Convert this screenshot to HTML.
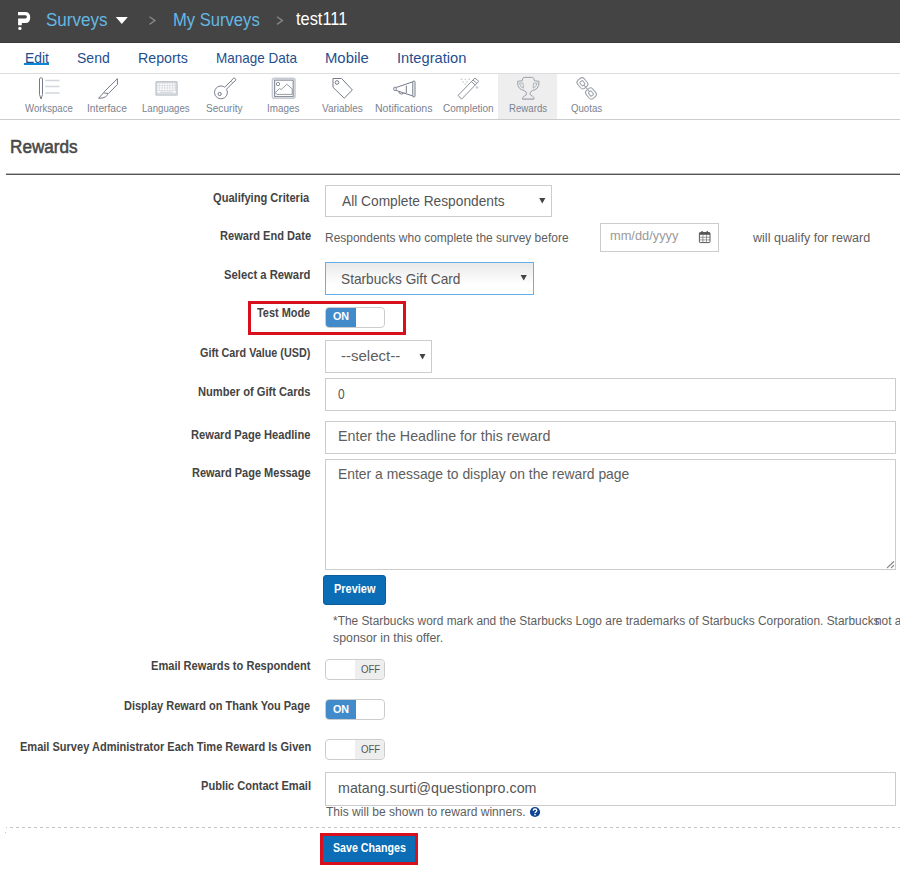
<!DOCTYPE html>
<html><head><meta charset="utf-8"><style>
*{margin:0;padding:0;box-sizing:border-box}
html,body{width:900px;height:874px;overflow:hidden;background:#fff;font-family:"Liberation Sans",sans-serif}
.abs,.t{position:absolute}
.t{white-space:pre;transform-origin:0 0}
.box{position:absolute;border:1px solid #cccccc;background:#fff}
.tg{position:absolute;width:60px;height:21px;border:1px solid #cccccc;border-radius:4px;background:#fff;overflow:hidden}
.tgon{position:absolute;left:0;top:0;width:29.5px;height:19px;background:#428bca}
.tgoff{position:absolute;right:0;top:0;width:29.5px;height:19px;background:#eeeeee}
</style></head><body>
<!-- header -->
<div class="abs" style="left:0;top:0;width:900px;height:43px;background:#444444"></div>
<div class="abs" style="left:0;top:42px;width:900px;height:1px;background:#3a3a3a"></div>
<svg class="abs" style="left:0;top:0" width="360" height="42">
 <path d="M18 11.9 L25.2 11.9 Q30.2 11.9 30.2 17.4 Q30.2 22.9 25.2 22.9 L21.8 22.9 L21.8 25.3 L18.1 25.3 L18.1 18.4 L25.4 18.4 Q26.9 18.4 26.9 16.85 Q26.9 15.3 25.4 15.3 L18 15.3 Z" fill="#ffffff"/>
 <circle cx="19.9" cy="28.4" r="1.65" fill="#fff"/>
 <path d="M115.8 17 L127.8 17 L121.8 24 Z" fill="#ffffff"/>
 <path d="M149.5 16.8 L155 20.6 L149.5 24.4" fill="none" stroke="#888888" stroke-width="1.3"/>
 <path d="M277 16.8 L282.5 20.6 L277 24.4" fill="none" stroke="#888888" stroke-width="1.3"/>
</svg>
<!-- nav -->
<div class="abs" style="left:24.2px;top:63.4px;width:24.7px;height:1.8px;background:#0b88d5"></div>
<div class="abs" style="left:0;top:73px;width:900px;height:1px;background:#dddddd"></div>
<div class="abs" style="left:498px;top:74px;width:59px;height:45px;background:#eeeeee"></div>
<div class="abs" style="left:0;top:119px;width:900px;height:1px;background:#cccccc"></div>

<svg class="abs" style="left:0;top:74px" width="620" height="30" viewBox="0 74 620 30">
 <g fill="none" stroke="#747c89" stroke-width="1" stroke-linejoin="round">
  <!-- workspace pencil -->
  <path d="M39.5 78.5 Q41 76.8 42.5 78.5 L42.5 94.5 L41 99 L39.5 94.5 Z"/>
  <!-- interface scalpel -->
  <path d="M117.4 78.7 L117.5 84.4 L108.6 93.3 M117.4 78.7 L104.2 91.8 M103.2 92.8 L108.6 93.6 M103.6 92.6 L98.6 98.3 Q103.5 98.3 105.6 96.8 Q107 95.6 107.7 94.2"/>
  <!-- security key -->
  <path d="M224.7 87.2 A6.4 6.4 0 1 0 226.5 89.2"/>
  <circle cx="219.7" cy="94" r="1.6"/>
  <path d="M224.7 87.2 L231.8 80.2 M226.5 89.2 L233.3 82.4 M231.8 80.2 L233.2 78.4 Q234.2 77.6 235.3 78.6 Q236.3 79.6 235.4 80.6 L233.3 82.4 M231.6 81.6 L232.4 82.6"/>
  <!-- images -->
  <rect x="274.6" y="80.2" width="18.6" height="16.4" stroke="#8b929d" stroke-width="1.2"/>
  <path d="M275.3 92.7 L279.6 88.4 L281.1 89.6 L286.9 84.3 L292.2 88.9 L292.2 94.4 L276.8 94.4 Z" stroke="#8b929d" stroke-width="0.9"/>
  <circle cx="278" cy="84" r="1.7" stroke="#8b929d"/>
  <!-- tag -->
  <path d="M333 78.5 L341.6 78.5 L352.4 90 L344.2 98.2 L333 87.3 Z"/>
  <circle cx="337" cy="82.5" r="1.8"/>
  <!-- megaphone -->
  <path d="M396.2 87.5 L412.8 81.8 M396.2 90.4 L412.8 96 M406.3 85.6 L406.3 93.2"/>
  <rect x="393.8" y="87.2" width="2.4" height="3.4" rx="1"/>
  <rect x="412.8" y="81" width="2.2" height="16" rx="1.1"/>
  <path d="M398.8 91.6 Q399 94 401.5 94 Q403.5 94 404 92.8"/>
  <!-- wand -->
  <path d="M458.2 95.3 L461.6 99.2 L478.8 81.3 L474.9 78 Z M473 80 L476.9 83.4 M471.4 81.6 L475.2 85" stroke="#8a919c"/>
  <!-- trophy -->
  <path d="M 524.00 77.40 Q 522.40 77.60 522.20 80.80 L 517.60 81.30 Q 517.20 86.20 519.60 88.40 Q 521.50 90.00 524.30 90.60 Q 526.60 91.60 526.60 93.80 Q 526.50 95.30 524.00 96.30 Q 522.00 97.40 522.60 99.20 L 528.30 99.20" stroke="#9aa0aa"/>
  <path d="M 532.60 77.40 Q 534.20 77.60 534.40 80.80 L 539.00 81.30 Q 539.40 86.20 537.00 88.40 Q 535.10 90.00 532.30 90.60 Q 530.00 91.60 530.00 93.80 Q 530.10 95.30 532.60 96.30 Q 534.60 97.40 534.00 99.20 L 528.30 99.20" stroke="#9aa0aa"/>
  <path d="M524 77.4 L532.60 77.4" stroke="#9aa0aa"/>
  <path d="M519.4 83.1 L523 83.1 L523.5 88.2 Q520.2 87.2 519.4 83.1 Z M537.20 83.1 L533.60 83.1 L533.10 88.2 Q536.40 87.2 537.20 83.1 Z" stroke="#a9aeb7" stroke-width="0.9"/>
  <path d="M522.6 99.2 L534.00 99.2" stroke="#b3b8c0" stroke-width="1.6"/>
  <!-- chain -->
  <g transform="rotate(-40 586.6 88.3)" stroke="#9aa0aa">
   <rect x="582.3" y="76.6" width="8.6" height="10.4" rx="3"/>
   <rect x="584.8" y="79.4" width="3.6" height="4.6" rx="0.8"/>
   <rect x="582.3" y="89.9" width="8.6" height="10.4" rx="3"/>
   <rect x="584.8" y="92.8" width="3.6" height="4.6" rx="0.8"/>
   <path d="M586.6 84 V92.8"/>
  </g>
 </g>
 <g stroke="#d2d6dc" stroke-width="1.5">
  <path d="M45.2 80.4 H59.6 M45.2 86.4 H59.6 M45.2 93 H59.6"/>
 </g>
 <rect x="272.4" y="78.4" width="22.6" height="19.8" rx="2" fill="none" stroke="#c7ccd3" stroke-width="1.6"/>
 <!-- keyboard -->
 <rect x="155.3" y="81.1" width="22.5" height="14.7" rx="1.5" fill="#c3c8cf"/>
 <rect x="156.6" y="82.4" width="19.9" height="12.1" fill="#d9dde2"/>
 <g fill="#ffffff">
  <rect x="157.5" y="83.4" width="1.7" height="1.6"/><rect x="160.1" y="83.4" width="1.7" height="1.6"/><rect x="162.6" y="83.4" width="1.7" height="1.6"/><rect x="165.2" y="83.4" width="1.7" height="1.6"/><rect x="167.7" y="83.4" width="1.7" height="1.6"/><rect x="170.3" y="83.4" width="1.7" height="1.6"/><rect x="172.8" y="83.4" width="1.7" height="1.6"/><rect x="157.5" y="85.9" width="1.7" height="1.6"/><rect x="160.1" y="85.9" width="1.7" height="1.6"/><rect x="162.6" y="85.9" width="1.7" height="1.6"/><rect x="165.2" y="85.9" width="1.7" height="1.6"/><rect x="167.7" y="85.9" width="1.7" height="1.6"/><rect x="170.3" y="85.9" width="1.7" height="1.6"/><rect x="172.8" y="85.9" width="1.7" height="1.6"/><rect x="157.5" y="88.4" width="1.7" height="1.6"/><rect x="160.1" y="88.4" width="1.7" height="1.6"/><rect x="162.6" y="88.4" width="1.7" height="1.6"/><rect x="165.2" y="88.4" width="1.7" height="1.6"/><rect x="167.7" y="88.4" width="1.7" height="1.6"/><rect x="170.3" y="88.4" width="1.7" height="1.6"/><rect x="172.8" y="88.4" width="1.7" height="1.6"/><rect x="157.5" y="90.9" width="3" height="1.6"/><rect x="172.5" y="90.9" width="3.2" height="1.6"/><rect x="161.4" y="90.9" width="10.2" height="1.0" fill="#eef0f2"/>
 </g>
 <g fill="#c5cad2">
  <circle cx="461.5" cy="79.3" r="0.9"/><circle cx="469.3" cy="79.3" r="0.9"/><circle cx="465.3" cy="79.6" r="0.8"/><circle cx="463.3" cy="82" r="0.8"/><circle cx="467" cy="82" r="0.8"/><circle cx="465.2" cy="84.3" r="0.8"/><circle cx="477" cy="87.5" r="1.2"/>
 </g>
</svg>
<!-- title rule -->
<div class="abs" style="left:6px;top:173px;width:894px;height:1px;background:#bbbbbb"></div>
<div class="abs" style="left:6px;top:174px;width:894px;height:1px;background:#555555"></div>
<!-- fields -->
<div class="box" style="left:325px;top:185px;width:227px;height:32px"></div>
<div class="box" style="left:600px;top:223px;width:119px;height:29px"></div>
<svg class="abs" style="left:698px;top:230px" width="14" height="14" viewBox="0 0 14 14">
 <rect x="1.4" y="2.6" width="10.6" height="10" rx="0.8" fill="none" stroke="#555" stroke-width="1"/>
 <rect x="1.4" y="2.6" width="10.6" height="2.2" fill="#555"/>
 <path d="M1.4 7.3 H12 M1.4 9.9 H12 M4.9 4.8 V12.6 M8.5 4.8 V12.6" stroke="#777" stroke-width="0.7"/>
 <rect x="3.4" y="1" width="1.5" height="2.6" rx="0.6" fill="#555"/><rect x="8.5" y="1" width="1.5" height="2.6" rx="0.6" fill="#555"/>
</svg>
<div class="box" style="left:325px;top:262px;width:209px;height:33px;border-color:#66afe9;background:linear-gradient(#e9e9e9,#ffffff 70%)"></div>
<!-- test mode red box -->
<div class="abs" style="left:248px;top:301px;width:158px;height:34px;border:3px solid #d8101e"></div>
<div class="tg" style="left:325px;top:307px"><div class="tgon"></div></div>
<div class="box" style="left:325px;top:340px;width:107px;height:33px"></div>
<div class="box" style="left:325px;top:378px;width:571px;height:33px"></div>
<div class="box" style="left:325px;top:421px;width:571px;height:33px"></div>
<div class="box" style="left:325px;top:459px;width:571px;height:111px"></div>
<svg class="abs" style="left:884px;top:558px" width="11" height="11">
 <path d="M3.4 9.6 L9.6 3.7 M7.4 9.6 L9.6 7.5" stroke="#8a8a8a" stroke-width="1.3" stroke-linecap="round"/>
</svg>
<div class="abs" style="left:323px;top:575px;width:63px;height:30px;background:#0a6db5;border:1px solid #0b5d9c;border-radius:3px"></div>
<div class="tg" style="left:325px;top:659px"><div class="tgoff"></div></div>
<div class="tg" style="left:325px;top:699px"><div class="tgon"></div></div>
<div class="tg" style="left:325px;top:739px"><div class="tgoff"></div></div>
<div class="box" style="left:325px;top:772px;width:571px;height:34px"></div>
<svg class="abs" style="left:529px;top:806px" width="12" height="12" viewBox="0 0 12 12">
 <circle cx="6" cy="6" r="5.1" fill="#0f4595"/>
 <path d="M4.3 4.8 Q4.3 3 6 3 Q7.8 3 7.8 4.6 Q7.8 5.6 6.6 6.1 Q6 6.4 6 7.2" fill="none" stroke="#fff" stroke-width="1.3"/>
 <rect x="5.3" y="8" width="1.4" height="1.4" fill="#fff"/>
</svg>
<div class="abs" style="left:6px;top:827px;width:894px;height:1px;background-image:linear-gradient(90deg,#c4c4c4 50%,transparent 50%);background-size:6px 1px;background-position:-2px 0"></div>
<div class="abs" style="left:5px;top:832px;width:1px;height:1px;background:#c4c4c4"></div>
<div class="abs" style="left:319.5px;top:833px;width:98px;height:32px;border:3px solid #d8101e;background:#0a6db5"></div>
<svg class="abs" style="left:0;top:0" width="900" height="874">
 <path d="M539.2 198 L545.4 198 L542.3 203.5 Z" fill="#444"/>
 <path d="M520.6 275 L526.8 275 L523.7 280.5 Z" fill="#444"/>
 <path d="M419.5 354 L425.5 354 L422.5 359.5 Z" fill="#444"/>
</svg>
<div class="t" style="left:46.10px;top:10.30px;font-size:19px;line-height:19px;font-weight:400;color:#64b8e4;transform:scaleX(0.8955);">Surveys</div>
<div class="t" style="left:173.13px;top:10.30px;font-size:19px;line-height:19px;font-weight:400;color:#64b8e4;transform:scaleX(0.8735);">My Surveys</div>
<div class="t" style="left:296.00px;top:10.40px;font-size:18.5px;line-height:18.5px;font-weight:400;color:#ffffff;transform:scaleX(0.8860);">test111</div>
<div class="t" style="left:24.54px;top:50.60px;font-size:14.5px;line-height:14.5px;font-weight:400;color:#1f4f8f;transform:scaleX(0.9583);">Edit</div>
<div class="t" style="left:77.03px;top:50.60px;font-size:14.5px;line-height:14.5px;font-weight:400;color:#1f4f8f;transform:scaleX(0.9688);">Send</div>
<div class="t" style="left:138.02px;top:50.60px;font-size:14.5px;line-height:14.5px;font-weight:400;color:#1f4f8f;transform:scaleX(0.9796);">Reports</div>
<div class="t" style="left:215.57px;top:50.60px;font-size:14.5px;line-height:14.5px;font-weight:400;color:#1f4f8f;transform:scaleX(0.9302);">Manage Data</div>
<div class="t" style="left:324.98px;top:50.60px;font-size:14.5px;line-height:14.5px;font-weight:400;color:#1f4f8f;transform:scaleX(1.0244);">Mobile</div>
<div class="t" style="left:397.19px;top:50.60px;font-size:14.5px;line-height:14.5px;font-weight:400;color:#1f4f8f;transform:scaleX(1.0119);">Integration</div>
<div class="t" style="left:25.00px;top:102.80px;font-size:10.5px;line-height:10.5px;font-weight:400;color:#7b8291;transform:scaleX(0.9135);">Workspace</div>
<div class="t" style="left:87.03px;top:102.80px;font-size:10.5px;line-height:10.5px;font-weight:400;color:#7b8291;transform:scaleX(0.9750);">Interface</div>
<div class="t" style="left:141.88px;top:102.80px;font-size:10.5px;line-height:10.5px;font-weight:400;color:#7b8291;transform:scaleX(0.9157);">Languages</div>
<div class="t" style="left:206.04px;top:102.80px;font-size:10.5px;line-height:10.5px;font-weight:400;color:#7b8291;transform:scaleX(0.9622);">Security</div>
<div class="t" style="left:267.06px;top:102.80px;font-size:10.5px;line-height:10.5px;font-weight:400;color:#7b8291;transform:scaleX(0.9394);">Images</div>
<div class="t" style="left:321.70px;top:102.80px;font-size:10.5px;line-height:10.5px;font-weight:400;color:#7b8291;transform:scaleX(0.9488);">Variables</div>
<div class="t" style="left:375.49px;top:102.80px;font-size:10.5px;line-height:10.5px;font-weight:400;color:#7b8291;transform:scaleX(1.0054);">Notifications</div>
<div class="t" style="left:443.00px;top:102.80px;font-size:10.5px;line-height:10.5px;font-weight:400;color:#7b8291;transform:scaleX(0.9528);">Completion</div>
<div class="t" style="left:508.78px;top:102.80px;font-size:10.5px;line-height:10.5px;font-weight:400;color:#7b8291;transform:scaleX(0.9200);">Rewards</div>
<div class="t" style="left:571.30px;top:102.80px;font-size:10.5px;line-height:10.5px;font-weight:400;color:#7b8291;transform:scaleX(0.9176);">Quotas</div>
<div class="t" style="left:9.85px;top:138.00px;font-size:18px;line-height:18px;font-weight:400;color:#484848;transform:scaleX(0.9529);-webkit-text-stroke:0.55px #484848;">Rewards</div>
<div class="t" style="left:213.30px;top:192.00px;font-size:12.5px;line-height:12.5px;font-weight:700;color:#444444;transform:scaleX(0.8872);">Qualifying Criteria</div>
<div class="t" style="left:219.61px;top:230.00px;font-size:12.5px;line-height:12.5px;font-weight:700;color:#444444;transform:scaleX(0.8861);">Reward End Date</div>
<div class="t" style="left:224.40px;top:269.00px;font-size:12.5px;line-height:12.5px;font-weight:700;color:#444444;transform:scaleX(0.9011);">Select a Reward</div>
<div class="t" style="left:256.70px;top:307.20px;font-size:12.5px;line-height:12.5px;font-weight:700;color:#444444;transform:scaleX(0.8738);">Test Mode</div>
<div class="t" style="left:199.50px;top:347.00px;font-size:12.5px;line-height:12.5px;font-weight:700;color:#444444;transform:scaleX(0.8633);">Gift Card Value (USD)</div>
<div class="t" style="left:198.11px;top:385.70px;font-size:12.5px;line-height:12.5px;font-weight:700;color:#444444;transform:scaleX(0.8904);">Number of Gift Cards</div>
<div class="t" style="left:190.61px;top:429.00px;font-size:12.5px;line-height:12.5px;font-weight:700;color:#444444;transform:scaleX(0.8910);">Reward Page Headline</div>
<div class="t" style="left:192.12px;top:467.00px;font-size:12.5px;line-height:12.5px;font-weight:700;color:#444444;transform:scaleX(0.8797);">Reward Page Message</div>
<div class="t" style="left:150.91px;top:660.30px;font-size:12.5px;line-height:12.5px;font-weight:700;color:#444444;transform:scaleX(0.8860);">Email Rewards to Respondent</div>
<div class="t" style="left:124.32px;top:700.40px;font-size:12.5px;line-height:12.5px;font-weight:700;color:#444444;transform:scaleX(0.8800);">Display Reward on Thank You Page</div>
<div class="t" style="left:19.72px;top:740.60px;font-size:12.5px;line-height:12.5px;font-weight:700;color:#444444;transform:scaleX(0.8823);">Email Survey Administrator Each Time Reward Is Given</div>
<div class="t" style="left:201.32px;top:780.30px;font-size:12.5px;line-height:12.5px;font-weight:700;color:#444444;transform:scaleX(0.8846);">Public Contact Email</div>
<div class="t" style="left:342.00px;top:194.00px;font-size:14.5px;line-height:14.5px;font-weight:400;color:#555555;transform:scaleX(0.9474);">All Complete Respondents</div>
<div class="t" style="left:325.04px;top:231.90px;font-size:12.5px;line-height:12.5px;font-weight:400;color:#5e5e5e;transform:scaleX(0.9577);">Respondents who complete the survey before</div>
<div class="t" style="left:609.97px;top:230.00px;font-size:12.5px;line-height:12.5px;font-weight:400;color:#9a9a9a;transform:scaleX(1.0258);">mm/dd/yyyy</div>
<div class="t" style="left:753.40px;top:231.90px;font-size:12.5px;line-height:12.5px;font-weight:400;color:#5e5e5e;transform:scaleX(1.0034);">will qualify for reward</div>
<div class="t" style="left:341.06px;top:271.50px;font-size:14.5px;line-height:14.5px;font-weight:400;color:#555555;transform:scaleX(0.9440);">Starbucks Gift Card</div>
<div class="t" style="left:332.80px;top:311.00px;font-size:11.8px;line-height:11.8px;font-weight:700;color:#ffffff;transform:scaleX(0.9118);">ON</div>
<div class="t" style="left:340.96px;top:349.10px;font-size:14.5px;line-height:14.5px;font-weight:400;color:#5e5e5e;transform:scaleX(1.0357);">--select--</div>
<div class="t" style="left:338.40px;top:386.60px;font-size:14.5px;line-height:14.5px;font-weight:400;color:#555555;transform:scaleX(0.8250);">0</div>
<div class="t" style="left:337.52px;top:429.40px;font-size:14.5px;line-height:14.5px;font-weight:400;color:#5e5e5e;transform:scaleX(0.9836);">Enter the Headline for this reward</div>
<div class="t" style="left:337.54px;top:467.30px;font-size:14.5px;line-height:14.5px;font-weight:400;color:#5e5e5e;transform:scaleX(0.9586);">Enter a message to display on the reward page</div>
<div class="t" style="left:333.79px;top:583.00px;font-size:12px;line-height:12px;font-weight:700;color:#ffffff;transform:scaleX(0.9133);">Preview</div>
<div class="t" style="left:332.50px;top:615.00px;font-size:12.5px;line-height:12.5px;font-weight:400;color:#5e5e5e;transform:scaleX(0.9512);">*The Starbucks word mark and the Starbucks Logo are trademarks of Starbucks Corporation. Starbucks</div>
<div class="t" style="left:874.55px;top:615.00px;font-size:12.5px;line-height:12.5px;font-weight:400;color:#5e5e5e;transform:scaleX(0.9512);">not a</div>
<div class="t" style="left:332.50px;top:631.70px;font-size:12.5px;line-height:12.5px;font-weight:400;color:#5e5e5e;transform:scaleX(0.9865);">sponsor in this offer.</div>
<div class="t" style="left:360.50px;top:664.00px;font-size:11px;line-height:11px;font-weight:400;color:#555555;transform:scaleX(0.8727);">OFF</div>
<div class="t" style="left:332.80px;top:703.90px;font-size:11.8px;line-height:11.8px;font-weight:700;color:#ffffff;transform:scaleX(0.9118);">ON</div>
<div class="t" style="left:360.50px;top:744.00px;font-size:11px;line-height:11px;font-weight:400;color:#555555;transform:scaleX(0.8727);">OFF</div>
<div class="t" style="left:337.72px;top:781.30px;font-size:14.5px;line-height:14.5px;font-weight:400;color:#555555;transform:scaleX(0.9840);">matang.surti@questionpro.com</div>
<div class="t" style="left:325.80px;top:805.80px;font-size:12.5px;line-height:12.5px;font-weight:400;color:#5e5e5e;transform:scaleX(0.9641);">This will be shown to reward winners.</div>
<div class="t" style="left:333.35px;top:841.70px;font-size:12.5px;line-height:12.5px;font-weight:700;color:#ffffff;transform:scaleX(0.8524);">Save Changes</div>
</body></html>
